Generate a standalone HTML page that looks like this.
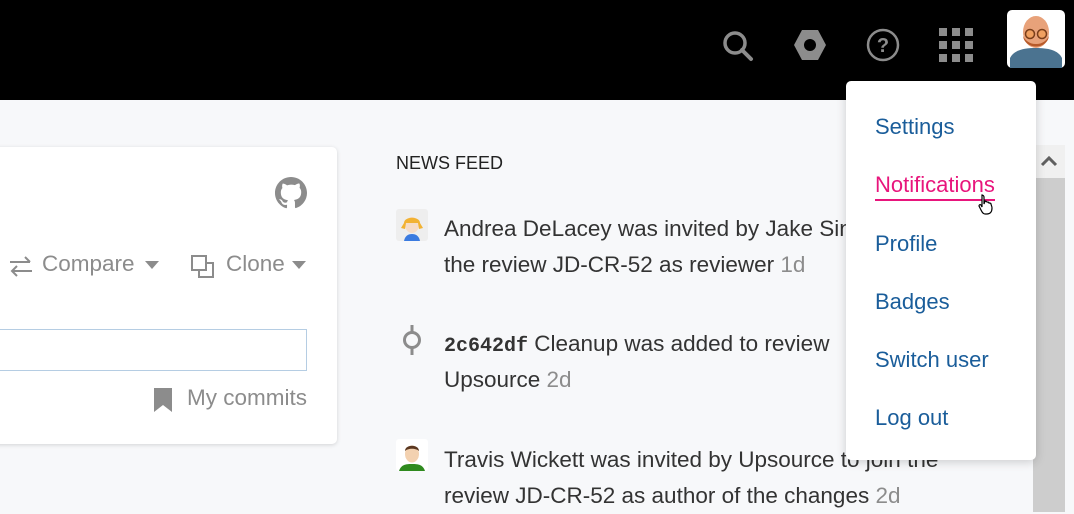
<!DOCTYPE html>
<html><head><style>
*{margin:0;padding:0;box-sizing:border-box}
body{width:1074px;height:512px;overflow:hidden;background:#f7f8fa;font-family:"Liberation Sans",sans-serif;position:relative;color:#333}
.top{position:absolute;left:0;top:0;width:1074px;height:100px;background:#000}
.abs{position:absolute}
.card{position:absolute;left:-10px;top:147px;width:347px;height:297px;background:#fff;border-radius:5px;box-shadow:0 1px 4px rgba(0,0,0,.15)}
.gray{color:#8c8c8c}
.feed{position:absolute;left:444px;font-size:22.5px;line-height:36px;color:#333;white-space:nowrap}
.menu{position:absolute;left:846px;top:81px;width:190px;height:379px;background:#fff;border-radius:5px;box-shadow:0 2px 10px rgba(0,0,0,.18)}
.menu div{position:absolute;left:29px;font-size:22px;color:#1a5d9a}
</style></head><body>
<div class="top"></div>
<svg class="abs" style="left:720px;top:28px" width="36" height="36" viewBox="0 0 36 36"><circle cx="15" cy="15" r="10" fill="none" stroke="#8c8c8c" stroke-width="3.5"/><path d="M22 22l9 9" stroke="#8c8c8c" stroke-width="4" stroke-linecap="round"/></svg>
<svg class="abs" style="left:793px;top:29px" width="34" height="32" viewBox="0 0 34 32"><path d="M9 1h16l8 15-8 15H9L1 16z" fill="#8c8c8c"/><circle cx="17" cy="16" r="6" fill="#000"/></svg>
<svg class="abs" style="left:866px;top:28px" width="34" height="34" viewBox="0 0 34 34"><circle cx="17" cy="17" r="15" fill="none" stroke="#8c8c8c" stroke-width="2.5"/><text x="17" y="24" font-size="20" font-weight="bold" text-anchor="middle" fill="#8c8c8c" font-family="Liberation Sans">?</text></svg>
<svg class="abs" style="left:939px;top:28px" width="34" height="34" viewBox="0 0 34 34" fill="#8c8c8c"><rect x="0" y="0" width="8" height="8"/><rect x="13" y="0" width="8" height="8"/><rect x="26" y="0" width="8" height="8"/><rect x="0" y="13" width="8" height="8"/><rect x="13" y="13" width="8" height="8"/><rect x="26" y="13" width="8" height="8"/><rect x="0" y="26" width="8" height="8"/><rect x="13" y="26" width="8" height="8"/><rect x="26" y="26" width="8" height="8"/></svg>
<svg class="abs" style="left:1007px;top:10px" width="58" height="58" viewBox="0 0 58 58"><rect width="58" height="58" rx="5" fill="#fff"/><path d="M3 58V48c4-8 14-10 26-10s22 2 26 10v10z" fill="#4b7390"/><ellipse cx="29" cy="22" rx="13" ry="16" fill="#e8a27a"/><path d="M16 26c2 14 24 14 26 0-2 4-6 8-13 8s-11-4-13-8z" fill="#b75a2a"/><circle cx="23" cy="24" r="4.5" fill="#f0a060" stroke="#7a3e1a" stroke-width="1.5"/><circle cx="35" cy="24" r="4.5" fill="#f0a060" stroke="#7a3e1a" stroke-width="1.5"/></svg>
<div class="card">
<svg class="abs" style="left:285px;top:30px" width="32" height="32" viewBox="0 0 16 16"><path fill="#8c8c8c" d="M8 0C3.58 0 0 3.580 0 8c0 3.54 2.29 6.53 5.470 7.59.4.07.55-.17.55-.38v-1.33c-2.23.48-2.7-1.07-2.7-1.07-.36-.92-.89-1.17-.89-1.17-.73-.5.06-.49.06-.49.8.06 1.23.83 1.23.83.72 1.22 1.87.87 2.33.66.07-.52.28-.87.5-1.070-1.78-.2-3.64-.89-3.64-3.95 0-.87.31-1.59.82-2.15-.08-.2-.36-1.02.08-2.12 0 0 .67-.21 2.2.82A7.6 7.6 0 0 1 8 3.8c.68 0 1.36.09 2 .27 1.53-1.04 2.2-.82 2.2-.82.44 1.1.16 1.92.08 2.12.51.56.82 1.27.82 2.15 0 3.07-1.87 3.750-3.65 3.95.29.25.54.73.54 1.48v2.2c0 .21.15.46.55.38A8 8 0 0 0 16 8c0-4.42-3.58-8-8-8z"/></svg>
<svg class="abs" style="left:18px;top:107px" width="26" height="26" viewBox="0 0 26 26" fill="none" stroke="#8c8c8c" stroke-width="2"><path d="M2 8h20M17 3l5 5M24 17H4M9 12l-5 5 5 5"/></svg>
<div class="abs gray" style="left:52px;top:104px;font-size:22.5px">Compare</div>
<svg class="abs" style="left:155px;top:114px" width="14" height="8"><path d="M0 0h14L7 8z" fill="#8c8c8c"/></svg>
<svg class="abs" style="left:201px;top:108px" width="24" height="24" viewBox="0 0 24 24" fill="none" stroke="#8c8c8c" stroke-width="2"><rect x="1" y="1" width="14" height="14"/><path d="M15 8h7v14H8v-7"/></svg>
<div class="abs gray" style="left:236px;top:104px;font-size:22.5px">Clone</div>
<svg class="abs" style="left:302px;top:114px" width="14" height="8"><path d="M0 0h14L7 8z" fill="#8c8c8c"/></svg>
<div class="abs" style="left:0;top:182px;width:317px;height:42px;border:1px solid #b5cde3"></div>
<svg class="abs" style="left:164px;top:241px" width="18" height="24"><path d="M0 0h18v24l-9-7-9 7z" fill="#8c8c8c"/></svg>
<div class="abs gray" style="right:30px;top:238px;font-size:22.5px">My commits</div>
</div>
<div class="abs" style="left:396px;top:153px;font-size:18px;color:#222">NEWS FEED</div>
<svg class="abs" style="left:396px;top:209px" width="32" height="32" viewBox="0 0 32 32"><rect width="32" height="32" rx="3" fill="#eeeeee"/><path d="M8 32c1-5 4-7 8-7s7 2 8 7z" fill="#3b7be0"/><ellipse cx="16" cy="16" rx="7" ry="8" fill="#f6dcc8"/><path d="M8 14c0-7 16-7 16 0l3 5-4 1-1-6-12 0-1 6-4-1z" fill="#f2b233"/></svg>
<div class="feed" style="top:211px;width:402px;overflow:hidden">Andrea DeLacey was invited by Jake Sinclair to join</div>
<div class="feed" style="top:247px">the review JD-CR-52 as reviewer <span class="gray">1d</span></div>
<svg class="abs" style="left:401px;top:325px" width="22" height="30" viewBox="0 0 22 30" fill="none" stroke="#8c8c8c" stroke-width="3"><circle cx="11" cy="15" r="7.5"/><path d="M11 0v7M11 23v7"/></svg>
<div class="feed" style="top:326px"><span style="font-family:'Liberation Mono',monospace;font-size:20px;font-weight:bold">2c642df</span> Cleanup was added to review</div>
<div class="feed" style="top:362px">Upsource <span class="gray">2d</span></div>
<svg class="abs" style="left:396px;top:439px" width="32" height="32" viewBox="0 0 32 32"><rect width="32" height="32" rx="3" fill="#fff"/><path d="M3 32c2-6 6-7 13-7s11 1 13 7z" fill="#2f8a1e"/><ellipse cx="16" cy="15" rx="7" ry="8.5" fill="#f3d1b0"/><path d="M9 12c0-7 14-7 14 0-3-3-11-3-14 0z" fill="#5a3720"/></svg>
<div class="feed" style="top:442px">Travis Wickett was invited by Upsource to join the</div>
<div class="feed" style="top:478px">review JD-CR-52 as author of the changes <span class="gray">2d</span></div>
<div class="abs" style="left:1033px;top:145px;width:32px;height:367px;background:#cdcdcd"></div>
<div class="abs" style="left:1033px;top:145px;width:32px;height:33px;background:#f0f0f0"></div>
<svg class="abs" style="left:1040px;top:155px" width="18" height="12"><path d="M2 10l7-7 7 7" fill="none" stroke="#606060" stroke-width="3"/></svg>
<div class="menu">
<div style="top:33px">Settings</div>
<div style="top:91px;color:#e8157c;border-bottom:2px solid #e8157c;padding-bottom:1px">Notifications</div>
<div style="top:150px">Profile</div>
<div style="top:208px">Badges</div>
<div style="top:266px">Switch user</div>
<div style="top:324px">Log out</div>
<svg style="position:absolute;left:132px;top:113px" width="16" height="22" viewBox="0 0 16 22"><path d="M4 1c1 0 2 1 2 2v7l1-3c1 0 2 1 2 1 1 0 2 0 2 1 1 0 2 0 2 1s1 2 1 4c0 4-2 6-5 6H7c-2 0-3-2-4-4L1 12c0-1 1-2 2-1l1 2V3c0-1 0-2 0-2z" fill="#fff" stroke="#000" stroke-width="1.2"/></svg>
</div>
</body></html>
